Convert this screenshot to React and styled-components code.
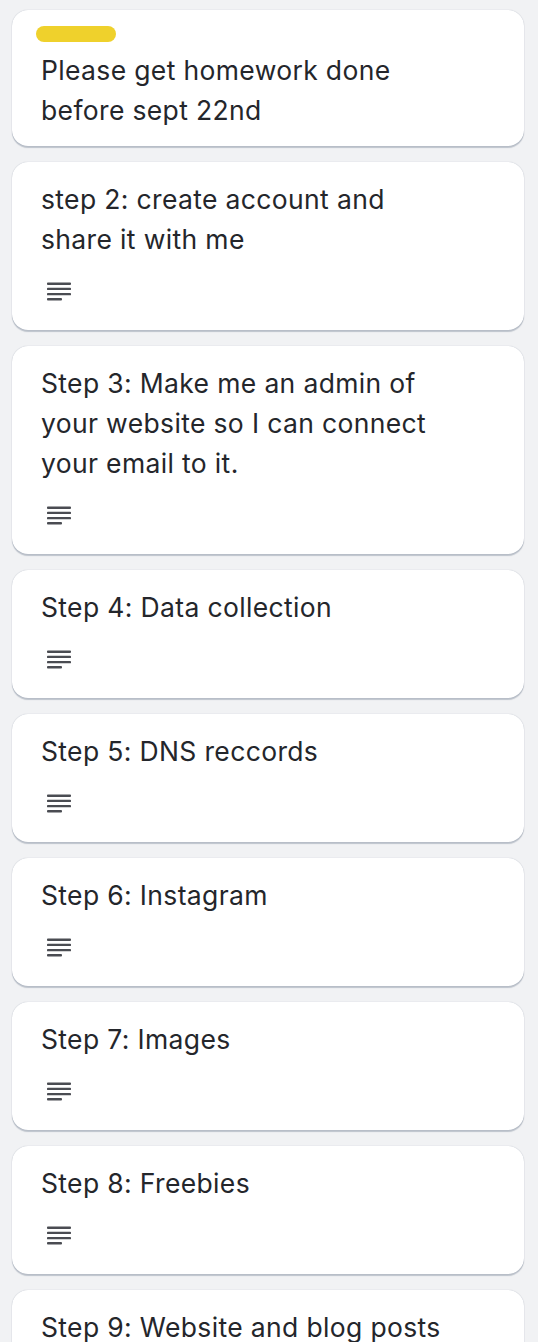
import React from "react";
import styled, { createGlobalStyle } from "styled-components";

const GlobalStyle = createGlobalStyle`
  html, body {
    margin: 0;
    padding: 0;
    background: #f1f2f4;
  }
  body {
    font-family: Inter, "Noto Sans", "Liberation Sans", sans-serif;
    -webkit-font-smoothing: antialiased;
  }
`;

const List = styled.div`
  display: flex;
  flex-direction: column;
  gap: 16px;
  padding: 10px 14px 10px 12px;
  height: 1342px;
  box-sizing: border-box;
  overflow: hidden;
`;

const Card = styled.div`
  background: #ffffff;
  border-radius: 16px;
  box-shadow: 0 2px 1px rgba(9, 30, 66, 0.22), 0 0 1px rgba(9, 30, 66, 0.3);
  padding: ${(p) => (p.$hasLabel ? "16px" : "17px")} 20px 0 29px;
  flex-shrink: 0;
`;

const Label = styled.div`
  width: 80px;
  height: 16px;
  border-radius: 8px;
  background: #efd12c;
  margin-left: -5px;
  margin-bottom: 8px;
`;

const Title = styled.div`
  font-size: 26.5px;
  line-height: 40px;
  color: #24262b;
  letter-spacing: 0.35px;
  white-space: nowrap;
  padding-bottom: ${(p) => (p.$last ? "16px" : "0")};
`;

const Badges = styled.div`
  display: flex;
  align-items: center;
  height: 40px;
  margin-top: 11px;
  padding-bottom: 20px;
`;

const Badge = styled.span`
  display: inline-flex;
  width: 32px;
  height: 32px;
  align-items: center;
  justify-content: center;
  margin-left: 2px;
  color: #4a4c52;
`;

function DescriptionIcon() {
  return (
    <svg width="26" height="24" viewBox="0 0 26 24">
      <g fill="currentColor">
        <rect x="1" y="4.5" width="24" height="2.4" rx="0.9" />
        <rect x="1" y="9.7" width="24" height="2.4" rx="0.9" />
        <rect x="1" y="14.9" width="24" height="2.4" rx="0.9" />
        <rect x="1" y="20.1" width="15" height="2.4" rx="0.9" />
      </g>
    </svg>
  );
}

const cards = [
  { label: true, lines: ["Please get homework done", "before sept 22nd"], desc: false },
  { lines: ["step 2: create account and", "share it with me"], desc: true },
  { lines: ["Step 3: Make me an admin of", "your website so I can connect", "your email to it."], desc: true },
  { lines: ["Step 4: Data collection"], desc: true },
  { lines: ["Step 5: DNS reccords"], desc: true },
  { lines: ["Step 6: Instagram"], desc: true },
  { lines: ["Step 7: Images"], desc: true },
  { lines: ["Step 8: Freebies"], desc: true },
  { lines: ["Step 9: Website and blog posts"], desc: true },
];

export default function App() {
  return (
    <>
      <GlobalStyle />
      <List>
        {cards.map((c, i) => (
          <Card key={i} $hasLabel={c.label}>
            {c.label && <Label />}
            <Title $last={!c.desc}>
              {c.lines.map((l, j) => (
                <div key={j}>{l}</div>
              ))}
            </Title>
            {c.desc && (
              <Badges>
                <Badge>
                  <DescriptionIcon />
                </Badge>
              </Badges>
            )}
          </Card>
        ))}
      </List>
    </>
  );
}
